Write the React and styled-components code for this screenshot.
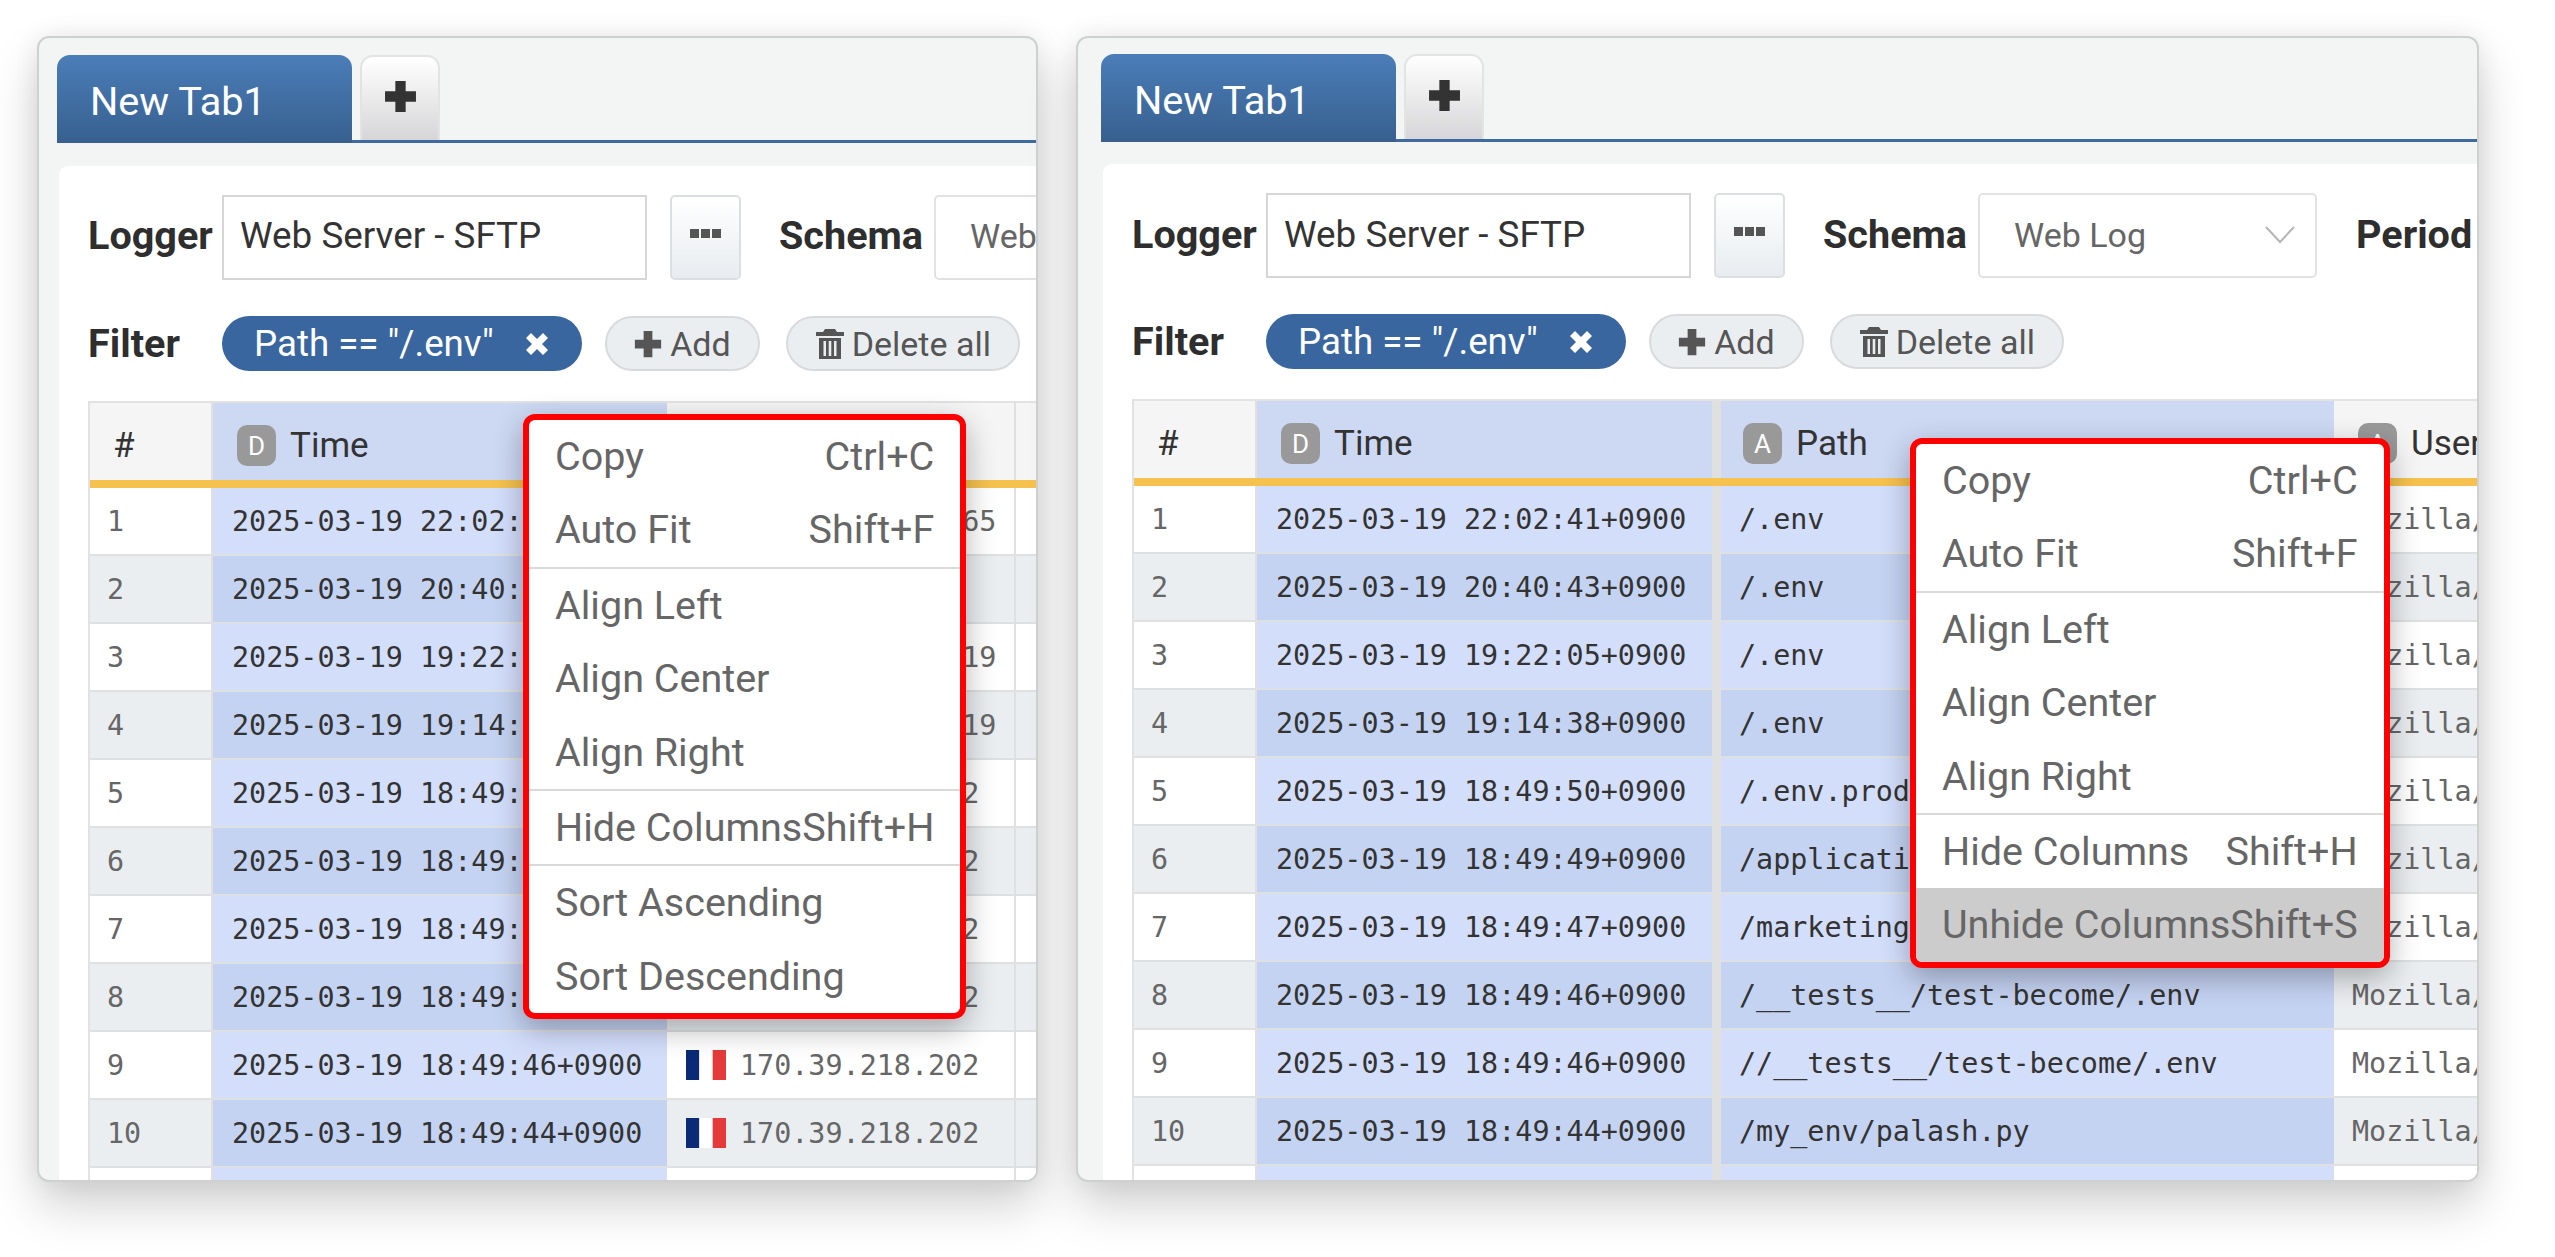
import React from 'react'
import styled, { createGlobalStyle } from 'styled-components'

const GlobalStyle = createGlobalStyle`
  html, body {
    margin: 0;
    background: #fff;
  }
  * {
    box-sizing: border-box;
  }
`

const Page = styled.div`
  display: flex;
  align-items: flex-start;
  gap: 38px;
  width: 2555px;
  height: 1257px;
  padding: 36px 0 0 37px;
  overflow: hidden;
  font-family: Roboto, sans-serif;
  color: #333;
`

const Panel = styled.section`
  position: relative;
  flex: none;
  display: flex;
  flex-direction: column;
  width: ${({ $width }) => $width}px;
  height: 1146px;
  padding: ${({ $top }) => $top}px 0 0 ${({ $inset }) => $inset}px;
  background: #f3f4f4;
  border: 2px solid #cfd0d0;
  border-radius: 12px;
  box-shadow: 0 24px 48px rgba(0, 0, 0, 0.18), 0 0 26px rgba(0, 0, 0, 0.07);
  overflow: hidden;
`

const TabBar = styled.div`
  flex: none;
  display: flex;
  align-items: flex-end;
  gap: 8px;
  height: 88px;
  border-bottom: 3px solid #3f6a9f;
`

const Tab = styled.div`
  width: 295px;
  height: 88px;
  margin-bottom: -3px;
  padding: 26px 0 0 33px;
  font-size: 39.7px;
  line-height: 42px;
  color: #fff;
  background: linear-gradient(#4b7db8, #37608f);
  border-radius: 13px 13px 0 0;
`

const AddTab = styled.div`
  display: flex;
  align-items: center;
  justify-content: center;
  width: 80px;
  height: 85px;
  padding-bottom: 4px;
  color: #333;
  background: linear-gradient(#fff, #d6d6d8);
  border: 2px solid #e2e3e3;
  border-bottom: 0;
  border-radius: 13px 13px 0 0;
`

const Content = styled.div`
  flex: 1;
  margin: ${({ $top }) => $top}px 0 0 2px;
  padding: 29px 0 0 29px;
  background: #fff;
  border-radius: 9px 0 0 0;
  min-width: 0;
`

const Toolbar = styled.div`
  display: flex;
  align-items: center;
  height: ${({ $height }) => $height}px;
  margin-bottom: ${({ $below }) => $below}px;
  white-space: nowrap;
`

const Label = styled.label`
  flex: none;
  width: ${({ $width }) => $width || 'auto'};
  margin-left: ${({ $left }) => $left || 0}px;
  margin-right: ${({ $right }) => $right || 0}px;
  padding-bottom: ${({ $raise }) => $raise || 0}px;
  font-size: 39.6px;
  font-weight: 700;
  color: #2e2e2e;
`

const Field = styled.div`
  flex: none;
  display: flex;
  align-items: center;
  justify-content: space-between;
  width: ${({ $width }) => $width}px;
  height: 85px;
  padding: 0 ${({ $padRight }) => $padRight}px ${({ $raise }) => $raise}px ${({ $padLeft }) => $padLeft}px;
  font-size: ${({ $muted }) => ($muted ? '34px' : '36.8px')};
  color: ${({ $muted }) => ($muted ? '#666' : '#333')};
  background: #fff;
  border: 2px solid ${({ $muted }) => ($muted ? '#e2e2e2' : '#d6d6d6')};
  border-radius: ${({ $muted }) => ($muted ? '5px' : '0')};
`

const MoreButton = styled.div`
  flex: none;
  display: flex;
  align-items: center;
  justify-content: center;
  width: 71px;
  height: 85px;
  margin-left: 23px;
  padding-bottom: 8px;
  background: linear-gradient(#fff, #e8ecf0);
  border: 2px solid #dcdfe2;
  border-radius: 5px;
`

const Chip = styled.div`
  flex: none;
  display: flex;
  align-items: center;
  gap: 30px;
  height: 55px;
  margin-right: 23px;
  padding: 0 32px;
  font-size: 36.7px;
  color: #fff;
  background: #39669f;
  border-radius: 28px;
`

const PillButton = styled.div`
  flex: none;
  display: flex;
  align-items: center;
  gap: 8px;
  height: 55px;
  margin-right: 26px;
  padding: 0 27.5px;
  font-size: 34px;
  color: #555;
  background: #ebeef1;
  border: 2px solid #d8dadc;
  border-radius: 28px;
`

const Table = styled.div`
  width: max-content;
  border-top: 2px solid #e2e2e2;
  border-left: 2px solid #e2e2e2;
`

const HeaderRow = styled.div`
  display: grid;
  grid-template-columns: ${({ $columns }) => $columns};
  height: 85px;
  border-bottom: 8px solid #f6c24f;
`

const HeaderCell = styled.div`
  display: flex;
  align-items: center;
  gap: 14px;
  padding: 8px 0 0 ${({ $pad }) => $pad || 24}px;
  font-size: 35px;
  color: #333;
  background: ${({ $selected }) => ($selected ? '#cdd8f3' : '#f5f5f5')};
  border-right: ${({ $divider }) => $divider || 2}px solid ${({ $selected, $divider }) => ($selected && !$divider ? 'transparent' : '#e0e0e0')};
`

const TypeBadge = styled.span`
  display: flex;
  align-items: center;
  justify-content: center;
  width: 39px;
  height: 41px;
  font-size: 26px;
  color: #fff;
  background: #999;
  border-radius: 10px;
`

const Row = styled.div`
  display: grid;
  grid-template-columns: ${({ $columns }) => $columns};
  height: 68px;
  background: ${({ $even }) => ($even ? '#ebeef1' : '#fff')};
  border-bottom: 2px solid #dfe0e1;
`

const Cell = styled.div`
  display: flex;
  align-items: center;
  gap: 14px;
  padding-left: ${({ $pad }) => $pad || 19}px;
  overflow: hidden;
  white-space: nowrap;
  font-family: "DejaVu Sans Mono", monospace;
  font-size: 28.4px;
  color: ${({ $selected }) => ($selected ? '#333' : '#666')};
  background: ${({ $selected, $even }) => {
    if (!$selected) return 'transparent'
    return $even ? '#c5d3f2' : '#d3defb'
  }};
  border-right: ${({ $divider }) => $divider || 2}px solid ${({ $selected, $divider }) => ($selected && !$divider ? 'transparent' : '#e0e0e0')};
`

const Menu = styled.div`
  position: absolute;
  top: ${({ $top }) => $top}px;
  left: ${({ $left }) => $left}px;
  width: max-content;
  color: #666;
  background: #fff;
  border: 6px solid #fe0000;
  border-radius: 12px;
  box-shadow: 0 10px 30px rgba(0, 0, 0, 0.3);
  overflow: hidden;
`

const MenuGroup = styled.div`
  & + & {
    border-top: 2px solid #d9d9d9;
  }
`

const MenuItem = styled.div`
  display: flex;
  justify-content: space-between;
  height: 73.4px;
  padding: 0 26px;
  font-size: 39.5px;
  line-height: 73px;
  background: ${({ $active }) => ($active ? '#ccc' : 'transparent')};
`

const PlusIcon = ({ size }) => (
  <svg width={size} height={size} viewBox="0 0 32 32" fill="currentColor">
    <path d="M11 1h10v10h10v10H21v10H11V21H1V11h10z" />
  </svg>
)

const CloseIcon = () => (
  <svg width="26" height="26" viewBox="0 0 26 26" fill="#fff">
    <path d="M7 2l6 6 6-6 5 5-6 6 6 6-5 5-6-6-6 6-5-5 6-6-6-6z" />
  </svg>
)

const TrashIcon = () => (
  <svg width="28" height="30" viewBox="0 0 28 30" fill="#555">
    <path d="M9 0h10l2 3h7v4H0V3h7zM3 9h22v21H3zM7.500 12v15h2.500V12zM12.700 12v15h2.600V12zM18 12v15h2.500V12z" fillRule="evenodd" />
  </svg>
)

const DotsIcon = () => (
  <svg width="31" height="9" viewBox="0 0 31 9" fill="#555">
    <path d="M0 0h9v9H0zM11 0h9v9h-9zM22 0h9v9h-9z" />
  </svg>
)

const Chevron = () => (
  <svg width="30" height="18" viewBox="0 0 30 18" fill="none" stroke="#b5b5b5" strokeWidth="2">
    <path d="M1 1l14 15L29 1" />
  </svg>
)

const FranceFlag = () => (
  <svg width="40" height="30" viewBox="0 0 3 2" preserveAspectRatio="none">
    <path fill="#0b2a75" d="M0 0h1v2H0z" />
    <path fill="#fff" d="M1 0h1v2H1z" />
    <path fill="#e53a3a" d="M2 0h1v2H2z" />
  </svg>
)

const times = [
  '2025-03-19 22:02:41+0900',
  '2025-03-19 20:40:43+0900',
  '2025-03-19 19:22:05+0900',
  '2025-03-19 19:14:38+0900',
  '2025-03-19 18:49:50+0900',
  '2025-03-19 18:49:49+0900',
  '2025-03-19 18:49:47+0900',
  '2025-03-19 18:49:46+0900',
  '2025-03-19 18:49:46+0900',
  '2025-03-19 18:49:44+0900',
  '2025-03-19 18:49:41+0900',
]

const remotes = [
  '185.177.172.165',
  '78.153.140.1',
  '161.135.188.219',
  '161.135.188.219',
  '170.39.218.202',
  '170.39.218.202',
  '170.39.218.202',
  '170.39.218.202',
  '170.39.218.202',
  '170.39.218.202',
  '170.39.218.202',
]

const paths = [
  '/.env',
  '/.env',
  '/.env',
  '/.env',
  '/.env.production',
  '/application/.env',
  '/marketing/.env',
  '/__tests__/test-become/.env',
  '//__tests__/test-become/.env',
  '/my_env/palash.py',
  '/.env.bak',
]

const baseItems = [
  [['Copy', 'Ctrl+C'], ['Auto Fit', 'Shift+F']],
  [['Align Left'], ['Align Center'], ['Align Right']],
]

const leftItems = [...baseItems, [['Hide Columns', 'Shift+H']], [['Sort Ascending'], ['Sort Descending']]]
const rightItems = [...baseItems, [['Hide Columns', 'Shift+H'], ['Unhide Columns', 'Shift+S', true]]]

const ContextMenu = ({ groups, top, left }) => (
  <Menu $top={top} $left={left}>
    {groups.map((group, i) => (
      <MenuGroup key={i}>
        {group.map(([label, keys, active]) => (
          <MenuItem key={label} $active={active}>
            <span>{label}</span>
            {keys && <span>{keys}</span>}
          </MenuItem>
        ))}
      </MenuGroup>
    ))}
  </Menu>
)

const TopBars = ({ period, raise }) => (
  <>
    <Toolbar $height={85} $below={36}>
      <Label $width="134px" $raise={raise + 1}>Logger</Label>
      <Field $width={425} $padLeft={16} $padRight={17} $raise={raise}>Web Server - SFTP</Field>
      <MoreButton><DotsIcon /></MoreButton>
      <Label $left={38} $right={11} $raise={raise + 1}>Schema</Label>
      <Field $width={339} $padLeft={34} $padRight={20} $raise={raise} $muted>
        Web Log
        <Chevron />
      </Field>
      {period && <Label $left={39} $raise={raise + 1}>Period</Label>}
    </Toolbar>
    <Toolbar $height={55} $below={30}>
      <Label $width="134px">Filter</Label>
      <Chip>
        Path == "/.env"
        <CloseIcon />
      </Chip>
      <PillButton><PlusIcon size={28} />Add</PillButton>
      <PillButton><TrashIcon />Delete all</PillButton>
    </Toolbar>
  </>
)

const leftColumns = '123px 454px 349px 400px'
const rightColumns = '123px 464px 613px 400px'

const App = () => (
  <>
    <GlobalStyle />
    <Page>
      <Panel $width={1001} $inset={18} $top={17}>
        <TabBar>
          <Tab>New Tab1</Tab>
          <AddTab><PlusIcon size={33} /></AddTab>
        </TabBar>
        <Content $top={23}>
          <TopBars raise={4} />
          <Table>
            <HeaderRow $columns={leftColumns}>
              <HeaderCell $pad={23}>#</HeaderCell>
              <HeaderCell $selected><TypeBadge>D</TypeBadge>Time</HeaderCell>
              <HeaderCell />
              <HeaderCell />
            </HeaderRow>
            {times.map((time, i) => (
              <Row key={i} $columns={leftColumns} $even={i % 2 === 1}>
                <Cell $pad={17}>{i + 1}</Cell>
                <Cell $selected $even={i % 2 === 1}>{time}</Cell>
                <Cell><FranceFlag />{remotes[i]}</Cell>
                <Cell />
              </Row>
            ))}
          </Table>
        </Content>
        <ContextMenu groups={leftItems} top={376} left={484} />
      </Panel>
      <Panel $width={1403} $inset={23} $top={16}>
        <TabBar>
          <Tab>New Tab1</Tab>
          <AddTab><PlusIcon size={33} /></AddTab>
        </TabBar>
        <Content $top={22}>
          <TopBars period raise={2} />
          <Table>
            <HeaderRow $columns={rightColumns}>
              <HeaderCell $pad={23}>#</HeaderCell>
              <HeaderCell $selected $divider={9}><TypeBadge>D</TypeBadge>Time</HeaderCell>
              <HeaderCell $pad={22} $selected><TypeBadge>A</TypeBadge>Path</HeaderCell>
              <HeaderCell><TypeBadge>A</TypeBadge>User Agent</HeaderCell>
            </HeaderRow>
            {times.map((time, i) => (
              <Row key={i} $columns={rightColumns} $even={i % 2 === 1}>
                <Cell $pad={17}>{i + 1}</Cell>
                <Cell $selected $even={i % 2 === 1} $divider={9}>{time}</Cell>
                <Cell $pad={18} $selected $even={i % 2 === 1}>{paths[i]}</Cell>
                <Cell $pad={18}>Mozilla/5.0 (Windows NT 10.0)</Cell>
              </Row>
            ))}
          </Table>
        </Content>
        <ContextMenu groups={rightItems} top={400} left={832} />
      </Panel>
    </Page>
  </>
)

export default App
